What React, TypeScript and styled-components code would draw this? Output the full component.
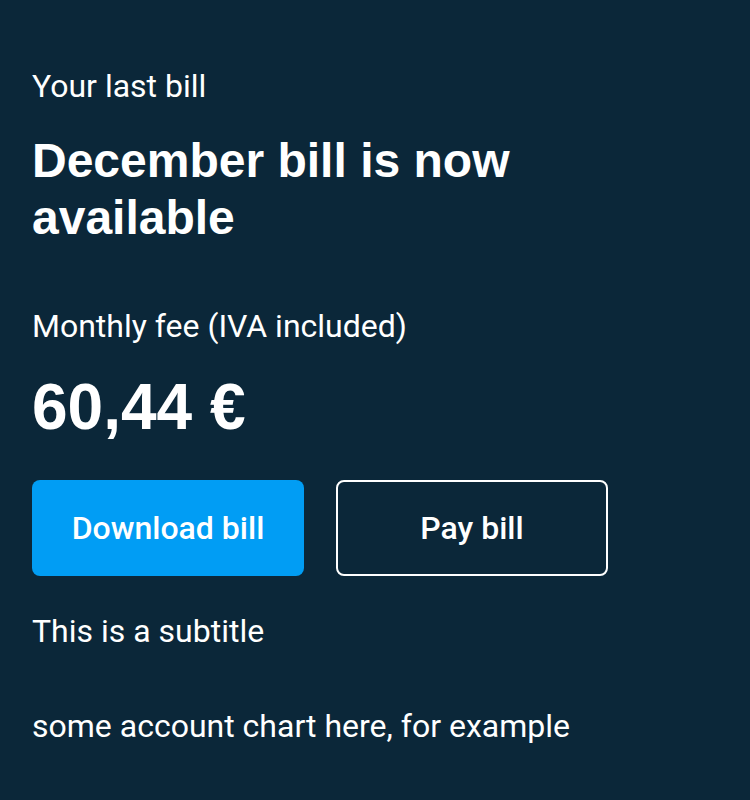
import React from "react";
import styled, { createGlobalStyle } from "styled-components";

const GlobalStyle = createGlobalStyle`
  html, body {
    margin: 0;
    padding: 0;
    background: #0b2739;
  }
  body {
    font-family: Roboto, "Liberation Sans", sans-serif;
    color: #ffffff;
  }
`;

const App: React.FC = () => {
  return (
    <>
      <GlobalStyle />
      <Card>
        <Pretitle>Your last bill</Pretitle>
        <Title>December bill is now available</Title>
        <FeeLabel>Monthly fee (IVA included)</FeeLabel>
        <Amount>60,44 €</Amount>
        <Actions>
          <Button variant="primary">Download bill</Button>
          <Button variant="secondary">Pay bill</Button>
        </Actions>
        <Subtitle>This is a subtitle</Subtitle>
        <Extra>some account chart here, for example</Extra>
      </Card>
    </>
  );
};

export default App;

const Card = styled.section`
  width: 750px;
  min-height: 800px;
  box-sizing: border-box;
  padding: 66px 32px 32px;
  background: #0b2739;
  display: flex;
  flex-direction: column;
  align-items: flex-start;
`;

const Pretitle = styled.p`
  margin: 0;
  font-size: 32px;
  line-height: 40px;
  font-weight: 400;
`;

const Title = styled.h1`
  margin: 26px 0 0;
  width: 560px;
  font-family: "Liberation Sans", Arial, sans-serif;
  font-size: 48px;
  line-height: 57px;
  font-weight: 700;
`;

const FeeLabel = styled.p`
  margin: 60px 0 0;
  font-size: 32px;
  line-height: 40px;
`;

const Amount = styled.p`
  margin: 25px 0 0;
  font-family: "Liberation Sans", Arial, sans-serif;
  font-size: 64px;
  line-height: 72px;
  font-weight: 700;
`;

const Actions = styled.div`
  display: flex;
  gap: 32px;
  margin-top: 37px;
`;

const Button = styled.button<{ variant: "primary" | "secondary" }>`
  width: 272px;
  height: 96px;
  box-sizing: border-box;
  border-radius: 8px;
  font-family: Roboto, "Liberation Sans", sans-serif;
  font-size: 32px;
  font-weight: 500;
  color: #ffffff;
  cursor: pointer;
  background: ${({ variant }) => (variant === "primary" ? "#019df4" : "transparent")};
  border: ${({ variant }) => (variant === "primary" ? "none" : "2px solid #ffffff")};
`;

const Subtitle = styled.p`
  margin: 35px 0 0;
  font-size: 32px;
  line-height: 40px;
`;

const Extra = styled.p`
  margin: 55px 0 0;
  font-size: 32px;
  line-height: 40px;
`;
